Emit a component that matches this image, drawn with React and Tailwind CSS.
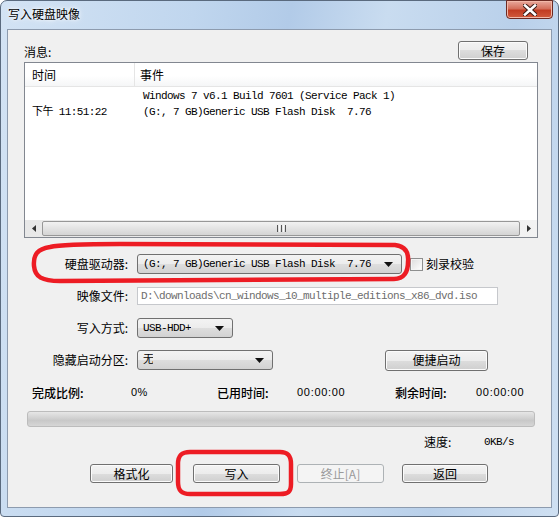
import React from "react";

const cjk = "font-['Noto_Sans_CJK_SC',sans-serif]";
const mono = "font-['Liberation_Mono','Noto_Sans_CJK_SC',monospace]";

function Arrow() {
  return (
    <svg width="9" height="5" viewBox="0 0 9 5" className="ml-auto shrink-0">
      <polygon points="0,0 9,0 4.5,5" fill="#111" />
    </svg>
  );
}

function Combo({ className, children }) {
  return (
    <div
      className={`flex items-center h-[20px] border border-[#707070] rounded-[3px] bg-[linear-gradient(#f3f3f3,#ececec_50%,#dedede_50%,#d2d2d2)] pl-[5px] pr-[8px] text-[11px] tracking-[-0.6px] text-black ${mono} ${className}`}
    >
      <span className="whitespace-pre overflow-hidden">{children}</span>
      <Arrow />
    </div>
  );
}

function Btn({ className, children, disabled }) {
  return (
    <div
      className={
        disabled
          ? `flex items-center justify-center h-[19px] border border-[#adb2b5] rounded-[3px] bg-[#f4f4f4] text-[#9a9a9a] text-[12px] ${cjk} ${className}`
          : `flex items-center justify-center h-[19px] border border-[#707070] rounded-[3px] bg-[linear-gradient(#f3f3f3,#ececec_50%,#dddddd_50%,#cfcfcf)] shadow-[inset_0_0_0_1px_#fbfbfb] text-black text-[12px] ${cjk} ${className}`
      }
    >
      {children}
    </div>
  );
}

function FormRow({ label, children }) {
  return (
    <div className="flex items-center h-[32px]">
      <div className={`w-[120px] text-right text-[12px] text-black ${cjk}`}>{label}</div>
      <div className="ml-[9px] flex items-center">{children}</div>
    </div>
  );
}

export default function App() {
  return (
    <div className="relative w-[559px] h-[517px] overflow-hidden bg-white">
      <div className="flex flex-col w-[559px] h-[517px] rounded-t-[7px] rounded-b-[4px] border border-[#5a6a7e] bg-[linear-gradient(100deg,#d3e3f4,#c0d6ee_30%,#b2cbe8_45%,#c9dcf0_60%,#b9d0ea_80%,#cfe0f2)]">
        {/* title bar */}
        <div className="flex h-[28px] shrink-0">
          <div className={`pl-[7px] pt-[5px] text-[12px] leading-[16px] text-black ${cjk} [text-shadow:0_0_6px_#ffffff,0_0_3px_#ffffff]`}>
            写入硬盘映像
          </div>
          <div className="ml-auto mr-[5px] -mt-px w-[47px] h-[19px] rounded-b-[4px] border border-[#6d2a22] bg-[linear-gradient(#e9a99c,#d46f5b_45%,#c23c22_55%,#d15a3c)] flex items-center justify-center shadow-[inset_0_0_0_1px_#f2b8a8]">
            <svg width="14" height="12" viewBox="0 0 14 12">
              <path d="M2 1.5 L12 10.5 M12 1.5 L2 10.5" stroke="#3b1a15" strokeWidth="4.6" strokeLinecap="square" />
              <path d="M2 1.5 L12 10.5 M12 1.5 L2 10.5" stroke="#ffffff" strokeWidth="2.6" strokeLinecap="square" />
            </svg>
          </div>
        </div>

        {/* body */}
        <div className="flex flex-1 px-[6px] pb-[8px]">
          <div className="flex-1 flex flex-col border border-[#8d9bae] bg-[#f0f0f0] pt-[11px]">
            {/* message header */}
            <div className="flex h-[19px]">
              <div className={`pl-[16px] pt-[3px] text-[12px] leading-[16px] text-black ${cjk}`}>消息:</div>
              <Btn className="ml-auto mr-[23px] w-[70px]">保存</Btn>
            </div>

            {/* list */}
            <div className="mt-[2px] ml-[16px] w-[514px] h-[176px] border border-[#828790] bg-white flex flex-col">
              <div className={`flex h-[24px] shrink-0 border-b border-[#e5e5e5] bg-[linear-gradient(#ffffff,#ffffff_55%,#f5f6f7)] text-[12px] text-black ${cjk}`}>
                <div className="w-[110px] pl-[7px] flex items-center border-r border-[#e5e5e5]">时间</div>
                <div className="pl-[5px] flex items-center">事件</div>
              </div>
              <div className={`flex-1 flex text-[11px] tracking-[-0.6px] leading-[16px] text-black ${mono}`}>
                <div className="w-[118px] pl-[7px] pt-[17px] whitespace-pre">下午 11:51:22</div>
                <div className="pt-[1px] whitespace-pre">
                  <div>Windows 7 v6.1 Build 7601 (Service Pack 1)</div>
                  <div>(G:, 7 GB)Generic USB Flash Disk  7.76</div>
                </div>
              </div>
              {/* horizontal scrollbar */}
              <div className="flex items-center h-[17px] shrink-0 bg-[linear-gradient(90deg,#e8e8e8,#f2f2f2)]">
                <div className="w-[17px] h-[17px] flex items-center justify-center">
                  <svg width="4" height="7" viewBox="0 0 4 7"><polygon points="4,0 4,7 0,3.5" fill="#333" /></svg>
                </div>
                <div className="flex-1 h-[15px] border border-[#979797] rounded-[2px] bg-[linear-gradient(#f2f2f2,#e3e3e3_50%,#d4d4d4)] flex items-center justify-center">
                  <div className="flex gap-[1px]">
                    <div className="w-[1px] h-[7px] bg-[#555]" />
                    <div className="w-[1px] h-[7px] bg-[#f8f8f8]" />
                    <div className="w-[1px] h-[7px] bg-[#555]" />
                    <div className="w-[1px] h-[7px] bg-[#f8f8f8]" />
                    <div className="w-[1px] h-[7px] bg-[#555]" />
                  </div>
                </div>
                <div className="w-[17px] h-[17px] flex items-center justify-center">
                  <svg width="4" height="7" viewBox="0 0 4 7"><polygon points="0,0 0,7 4,3.5" fill="#333" /></svg>
                </div>
              </div>
            </div>

            {/* form */}
            <div className="mt-[10px] flex flex-col">
              <FormRow label="硬盘驱动器:">
                <Combo className="w-[265px]">(G:, 7 GB)Generic USB Flash Disk  7.76</Combo>
                <div className="ml-[8px] w-[13px] h-[13px] border border-[#8e8f8f] bg-[linear-gradient(135deg,#dcdcdc,#ffffff)] shadow-[inset_0_0_0_1px_#f4f4f4]" />
                <div className={`ml-[3px] text-[12px] text-black ${cjk}`}>刻录校验</div>
              </FormRow>
              <FormRow label="映像文件:">
                <div className={`flex items-center w-[361px] h-[18px] border border-[#c6c8cc] bg-white pl-[3px] text-[11px] tracking-[-0.6px] text-[#6d6d6d] whitespace-pre ${mono}`}>
                  D:\downloads\cn_windows_10_multiple_editions_x86_dvd.iso
                </div>
              </FormRow>
              <FormRow label="写入方式:">
                <Combo className="w-[96px]">USB-HDD+</Combo>
              </FormRow>
              <FormRow label="隐藏启动分区:">
                <Combo className="w-[136px]">无</Combo>
                <Btn className="ml-[112px] w-[103px] h-[21px]">便捷启动</Btn>
              </FormRow>
            </div>

            {/* status */}
            <div className="flex items-center h-[32px] pt-[1px] pl-[24px] text-[12px] text-black">
              <div className={`w-[99px] font-medium ${cjk}`}>完成比例:</div>
              <div className="w-[86px] font-['Liberation_Sans',sans-serif] text-[11px] tracking-[0.5px]">0%</div>
              <div className={`w-[80px] font-medium ${cjk}`}>已用时间:</div>
              <div className="w-[98px] font-['Liberation_Sans',sans-serif] text-[11px] tracking-[0.7px]">00:00:00</div>
              <div className={`w-[81px] font-medium ${cjk}`}>剩余时间:</div>
              <div className="font-['Liberation_Sans',sans-serif] text-[11px] tracking-[0.7px]">00:00:00</div>
            </div>
            <div className="mt-[3px] ml-[19px] w-[508px] h-[16px] border border-[#bcbcbc] rounded-[3px] bg-[linear-gradient(#e6e6e6,#d3d3d3_40%,#c8c8c8_60%,#d6d6d6)]" />
            <div className="flex items-center h-[30px] text-black">
              <div className={`ml-[416px] w-[60px] text-[12px] ${cjk}`}>速度:</div>
              <div className={`text-[11px] tracking-[-0.6px] ${mono}`}>0KB/s</div>
            </div>

            {/* buttons */}
            <div className="mt-[7px] flex">
              <Btn className="ml-[82px] w-[83px]">格式化</Btn>
              <Btn className="ml-[20px] w-[87px]">写入</Btn>
              <Btn disabled className="ml-[17px] w-[87px]">终止[A]</Btn>
              <Btn className="ml-[18px] w-[86px]">返回</Btn>
            </div>
          </div>
        </div>
      </div>

      {/* red annotation marks */}
      <svg className="absolute inset-0 pointer-events-none" width="559" height="517" viewBox="0 0 559 517">
        <path
          d="M50 247 C62 244 90 244 120 244 L395 245 C405 246 409 252 408 262 C408 272 404 279 394 279 L60 281 C42 281 35 277 34 266 C33 254 38 249 50 247 Z"
          fill="none"
          stroke="#ed1c24"
          strokeWidth="4.5"
        />
        <path
          d="M190 452 L280 452 C288 452 291 456 291 464 L291 484 C291 492 288 494 280 494 L190 494 C181 494 178 490 178 482 L178 464 C178 456 181 452 190 452 Z"
          fill="none"
          stroke="#ed1c24"
          strokeWidth="4.5"
        />
      </svg>
    </div>
  );
}
